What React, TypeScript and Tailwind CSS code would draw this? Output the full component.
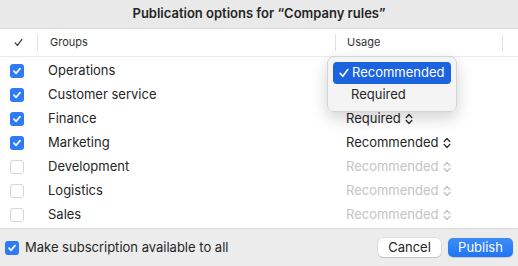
import React from 'react';

type Row = { name: string; checked: boolean; usage: string };

const rows: Row[] = [
  { name: 'Operations', checked: true, usage: '' },
  { name: 'Customer service', checked: true, usage: '' },
  { name: 'Finance', checked: true, usage: 'Required' },
  { name: 'Marketing', checked: true, usage: 'Recommended' },
  { name: 'Development', checked: false, usage: 'Recommended' },
  { name: 'Logistics', checked: false, usage: 'Recommended' },
  { name: 'Sales', checked: false, usage: 'Recommended' },
];

const Checkbox: React.FC<{ checked: boolean }> = ({ checked }) =>
  checked ? (
    <span className="flex h-[14px] w-[14px] items-center justify-center rounded-[3px] bg-[#2f7bf5]">
      <svg width="10" height="10" viewBox="0 0 10 10" fill="none">
        <path d="M2 5.2 4.1 7.3 8 2.6" stroke="white" strokeWidth="1.7" strokeLinecap="round" strokeLinejoin="round" />
      </svg>
    </span>
  ) : (
    <span className="block h-[14px] w-[14px] rounded-[3px] border border-[#d6d6d6] bg-white" />
  );

const Tick: React.FC<{ color: string; w: number; sw: number }> = ({ color, w, sw }) => (
  <svg width={w} height={w} viewBox="0 0 10 10" fill="none">
    <path d="M1.2 5.4 3.8 8.3 8.8 1.5" stroke={color} strokeWidth={sw} strokeLinecap="round" strokeLinejoin="round" />
  </svg>
);

const Updown: React.FC<{ color: string }> = ({ color }) => (
  <svg width="8" height="12" viewBox="0 0 8 12" fill="none" className="ml-[4px]">
    <path d="M1.2 4.4 4 1.5 6.8 4.4M1.2 7.6 4 10.5 6.8 7.6" stroke={color} strokeWidth="1.4" strokeLinecap="round" strokeLinejoin="round" />
  </svg>
);

export default function App() {
  return (
    <div className="relative flex h-[266px] w-[518px] flex-col overflow-hidden bg-white text-[#222] [font-family:Inter,'Liberation_Sans',sans-serif]">
      <div className="flex h-[29px] items-center justify-center border-b border-[#dcdcdc] bg-[#e9e9e9] text-[13px] font-semibold text-[#262626]">
        Publication options for “Company rules”
      </div>

      <div className="flex h-[28px] items-center border-b border-[#ebebeb] text-[11px] text-[#333]">
        <span className="flex w-[37px] pl-[14px]">
          <Tick color="#333" w={9} sw={1.3} />
        </span>
        <span className="h-[17px] w-px bg-[#e0e0e0]" />
        <span className="w-[297px] pl-[12px]">Groups</span>
        <span className="h-[17px] w-px bg-[#e0e0e0]" />
        <span className="w-[166px] pl-[11px]">Usage</span>
        <span className="h-[17px] w-px bg-[#e0e0e0]" />
      </div>

      <div className="flex flex-col pt-[2px]">
        {rows.map((r) => (
          <div key={r.name} className="flex h-[24px] items-center text-[13px]">
            <span className="flex w-[48px] pl-[10px]">
              <Checkbox checked={r.checked} />
            </span>
            <span className="w-[298px] text-[#262626]">{r.name}</span>
            {r.usage && (
              <span className={`flex items-center ${r.checked ? 'text-[#262626]' : 'text-[#c4c4c4]'}`}>
                {r.usage}
                <Updown color={r.checked ? '#333' : '#c4c4c4'} />
              </span>
            )}
          </div>
        ))}
      </div>

      <div className="mt-auto flex h-[38px] items-center border-t border-[#d9d9d9] bg-[#ececec] pl-[5px] pr-[5px]">
        <Checkbox checked />
        <span className="ml-[6px] text-[13px] text-[#262626]">Make subscription available to all</span>
        <button className="ml-auto h-[19px] w-[63px] rounded-[5px] bg-white text-[13px] text-[#262626] shadow-[0_0_0_0.5px_rgba(0,0,0,0.12),0_1px_1px_rgba(0,0,0,0.12)]">
          Cancel
        </button>
        <button className="ml-[7px] h-[19px] w-[65px] rounded-[5px] bg-gradient-to-b from-[#3d8cf7] to-[#1f74f1] text-[13px] text-white shadow-[0_0.5px_1px_rgba(0,0,0,0.15)]">
          Publish
        </button>
      </div>

      <div className="absolute left-[327px] top-[56px] w-[130px] rounded-[7px] border border-[#d4d4d4] bg-[#f3f3f3]/95 px-[5px] py-[5px] shadow-[0_6px_16px_rgba(0,0,0,0.18)]">
        <div className="flex h-[22px] items-center rounded-[4px] bg-[#1c63df] pl-[6px] text-[13px] text-white">
          <span className="mr-[3px] flex">
            <Tick color="white" w={10} sw={1.6} />
          </span>
          Recommended
        </div>
        <div className="flex h-[22px] items-center pl-[18px] text-[13px] text-[#262626]">Required</div>
      </div>
    </div>
  );
}
